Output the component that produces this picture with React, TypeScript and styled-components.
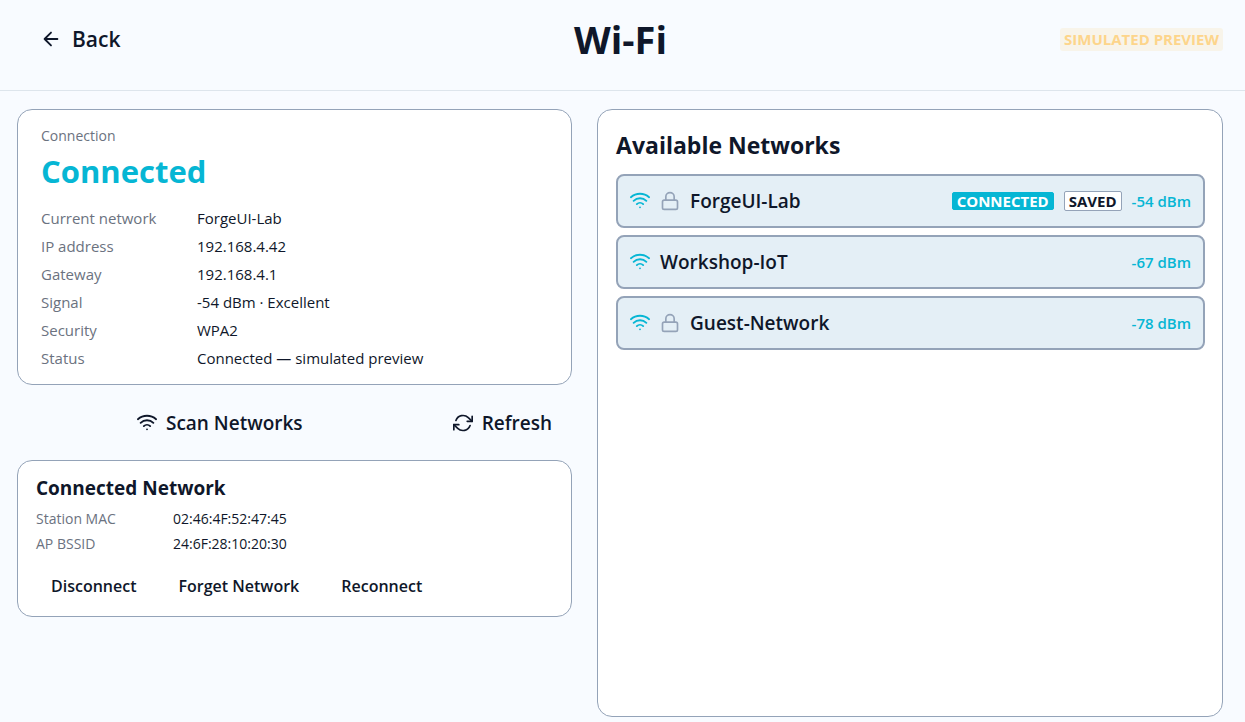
import React from "react";
import styled, { createGlobalStyle } from "styled-components";

const color = {
  page: "#f8fbff",
  ink: "#0f172a",
  muted: "#6b7280",
  accent: "#06b6d4",
  edge: "#94a3b8",
};

const GlobalStyle = createGlobalStyle`
  * { box-sizing: border-box; }
  body {
    margin: 0;
    background: ${color.page};
    color: ${color.ink};
    font-family: "Open Sans", "Noto Sans", sans-serif;
    font-size: 15px;
  }
  h1, h2, p, dl, dd, ul { margin: 0; padding: 0; }
  button { font-family: inherit; color: inherit; cursor: pointer; }
`;

const Page = styled.div`
  display: flex;
  flex-direction: column;
  min-height: 100vh;
`;

const Header = styled.header`
  display: grid;
  grid-template-columns: 1fr auto 1fr;
  align-items: center;
  height: 91px;
  padding: 0 22px 12px 18px;
  border-bottom: 1px solid #dde5ec;
`;

const TextButton = styled.button<{ $size: number; $gap?: number; $pad: number }>`
  display: inline-flex;
  align-items: center;
  gap: ${(p) => p.$gap ?? 0}px;
  padding: 0 ${(p) => p.$pad}px;
  border: 0;
  background: none;
  font-size: ${(p) => p.$size}px;
  font-weight: 600;
  line-height: 32px;
  white-space: nowrap;
`;

const HeaderStart = styled.div`
  justify-self: start;
`;

const Title = styled.h1`
  font-size: 38px;
  font-weight: 700;
  line-height: 48px;
`;

const Preview = styled.span`
  justify-self: end;
  padding: 0 4px;
  border-radius: 3px;
  background: #f8f4ea;
  color: #fdd58b;
  font-size: 15px;
  font-weight: 700;
  line-height: 23px;
`;

const Main = styled.main`
  flex: 1;
  display: grid;
  grid-template-columns: 47fr 53fr;
  gap: 25px;
  padding: 18px 22px 5px 17px;
`;

const Column = styled.div`
  display: flex;
  flex-direction: column;
  min-width: 0;
`;

const Card = styled.section<{ $pad: string }>`
  padding: ${(p) => p.$pad};
  border: 1px solid ${color.edge};
  border-radius: 15px;
  background: #fff;
`;

const Eyebrow = styled.p`
  color: ${color.muted};
  font-size: 14px;
  line-height: 20px;
`;

const State = styled.p`
  margin: 3px 0 11px;
  color: ${color.accent};
  font-size: 31px;
  font-weight: 700;
  line-height: 44px;
`;

const Details = styled.dl<{ $label: number; $line: number; $size: number }>`
  display: grid;
  grid-template-columns: ${(p) => p.$label}px 1fr;
  font-size: ${(p) => p.$size}px;
  line-height: ${(p) => p.$line}px;
  dt { color: ${color.muted}; }
`;

const Actions = styled.div`
  display: flex;
  align-items: center;
  justify-content: flex-end;
  gap: 110px;
  height: 75px;
`;

const CardTitle = styled.h2<{ $size: number; $line: number; $after: number }>`
  margin-bottom: ${(p) => p.$after}px;
  font-size: ${(p) => p.$size}px;
  font-weight: 700;
  line-height: ${(p) => p.$line}px;
`;

const CardActions = styled.div`
  display: flex;
  gap: 12px;
  margin-top: 14px;
`;

const NetworkList = styled.ul`
  display: flex;
  flex-direction: column;
  gap: 7px;
  list-style: none;
`;

const NetworkRow = styled.button`
  display: flex;
  align-items: center;
  gap: 10px;
  width: 100%;
  height: 54px;
  padding: 0 12px;
  border: 2px solid ${color.edge};
  border-radius: 8px;
  background: #e4eff6;
  text-align: left;
`;

const NetworkName = styled.span`
  flex: 1;
  font-size: 19px;
  font-weight: 600;
  line-height: 26px;
  white-space: nowrap;
`;

const Tag = styled.span<{ $solid?: boolean }>`
  padding: 0 4px;
  border: 1px solid ${(p) => (p.$solid ? color.accent : color.edge)};
  border-radius: 2px;
  background: ${(p) => (p.$solid ? color.accent : "#fff")};
  color: ${(p) => (p.$solid ? "#fff" : color.ink)};
  font-size: 15px;
  font-weight: 700;
  line-height: ${(p) => (p.$solid ? 16 : 18)}px;
`;

const Strength = styled.span`
  color: ${color.accent};
  font-size: 15px;
  font-weight: 600;
  line-height: 20px;
`;

const Glyph = styled.svg`
  flex: none;
  fill: none;
  stroke: currentColor;
  stroke-width: 2;
  stroke-linecap: round;
  stroke-linejoin: round;
`;

const WifiGlyph = styled(Glyph)<{ $accent?: boolean }>`
  color: ${(p) => (p.$accent ? color.accent : color.ink)};
`;

const LockGlyph = styled(Glyph)`
  color: ${color.edge};
`;

const Wifi = ({ accent }: { accent?: boolean }) => (
  <WifiGlyph $accent={accent} width="20" height="20" viewBox="1 2 22 22" aria-hidden="true">
    <path d="M12 20h.01M2 8.82a15 15 0 0 1 20 0M5 12.859a10 10 0 0 1 14 0M8.5 16.429a5 5 0 0 1 7 0" />
  </WifiGlyph>
);

const Lock = () => (
  <LockGlyph width="20" height="20" viewBox="0 0 24 24" aria-hidden="true">
    <rect x="3" y="11" width="18" height="11" rx="2" />
    <path d="M7 11V7a5 5 0 0 1 10 0v4" />
  </LockGlyph>
);

const Refresh = () => (
  <Glyph width="20" height="20" viewBox="0 0 24 24" aria-hidden="true">
    <path d="M23 4v6h-6M1 20v-6h6" />
    <path d="M3.51 9a9 9 0 0 1 14.85-3.36L23 10M1 14l4.64 4.36A9 9 0 0 0 20.49 15" />
  </Glyph>
);

const Back = () => (
  <Glyph width="22" height="22" viewBox="0 0 24 24" aria-hidden="true">
    <path d="M19 12H5M12 19l-7-7 7-7" />
  </Glyph>
);

const connection = [
  ["Current network", "ForgeUI-Lab"],
  ["IP address", "192.168.4.42"],
  ["Gateway", "192.168.4.1"],
  ["Signal", "-54 dBm · Excellent"],
  ["Security", "WPA2"],
  ["Status", "Connected — simulated preview"],
];

const hardware = [
  ["Station MAC", "02:46:4F:52:47:45"],
  ["AP BSSID", "24:6F:28:10:20:30"],
];

const networks = [
  { name: "ForgeUI-Lab", secure: true, connected: true, saved: true, dbm: -54 },
  { name: "Workshop-IoT", secure: false, connected: false, saved: false, dbm: -67 },
  { name: "Guest-Network", secure: true, connected: false, saved: false, dbm: -78 },
];

const Pairs = ({ rows }: { rows: string[][] }) => (
  <>
    {rows.map(([label, value]) => (
      <React.Fragment key={label}>
        <dt>{label}</dt>
        <dd>{value}</dd>
      </React.Fragment>
    ))}
  </>
);

export default function App() {
  return (
    <Page>
      <GlobalStyle />
      <Header>
        <HeaderStart>
          <TextButton $size={21} $gap={10} $pad={22}>
            <Back />
            Back
          </TextButton>
        </HeaderStart>
        <Title>Wi-Fi</Title>
        <Preview>SIMULATED PREVIEW</Preview>
      </Header>
      <Main>
        <Column>
          <Card $pad="16px 23px 12px">
            <Eyebrow>Connection</Eyebrow>
            <State>Connected</State>
            <Details $label={156} $line={28} $size={15}>
              <Pairs rows={connection} />
            </Details>
          </Card>
          <Actions>
            <TextButton $size={19} $gap={9} $pad={20}>
              <Wifi />
              Scan Networks
            </TextButton>
            <TextButton $size={19} $gap={9} $pad={20}>
              <Refresh />
              Refresh
            </TextButton>
          </Actions>
          <Card $pad="13px 18px 14px">
            <CardTitle $size={19} $line={28} $after={4}>Connected Network</CardTitle>
            <Details $label={137} $line={25} $size={14}>
              <Pairs rows={hardware} />
            </Details>
            <CardActions>
              <TextButton $size={16} $pad={15}>Disconnect</TextButton>
              <TextButton $size={16} $pad={15}>Forget Network</TextButton>
              <TextButton $size={16} $pad={15}>Reconnect</TextButton>
            </CardActions>
          </Card>
        </Column>
        <Card $pad="18px 17px 18px 18px">
          <CardTitle $size={23} $line={34} $after={12}>Available Networks</CardTitle>
          <NetworkList>
            {networks.map((n) => (
              <li key={n.name}>
                <NetworkRow>
                  <Wifi accent />
                  {n.secure && <Lock />}
                  <NetworkName>{n.name}</NetworkName>
                  {n.connected && <Tag $solid>CONNECTED</Tag>}
                  {n.saved && <Tag>SAVED</Tag>}
                  <Strength>{n.dbm} dBm</Strength>
                </NetworkRow>
              </li>
            ))}
          </NetworkList>
        </Card>
      </Main>
    </Page>
  );
}
